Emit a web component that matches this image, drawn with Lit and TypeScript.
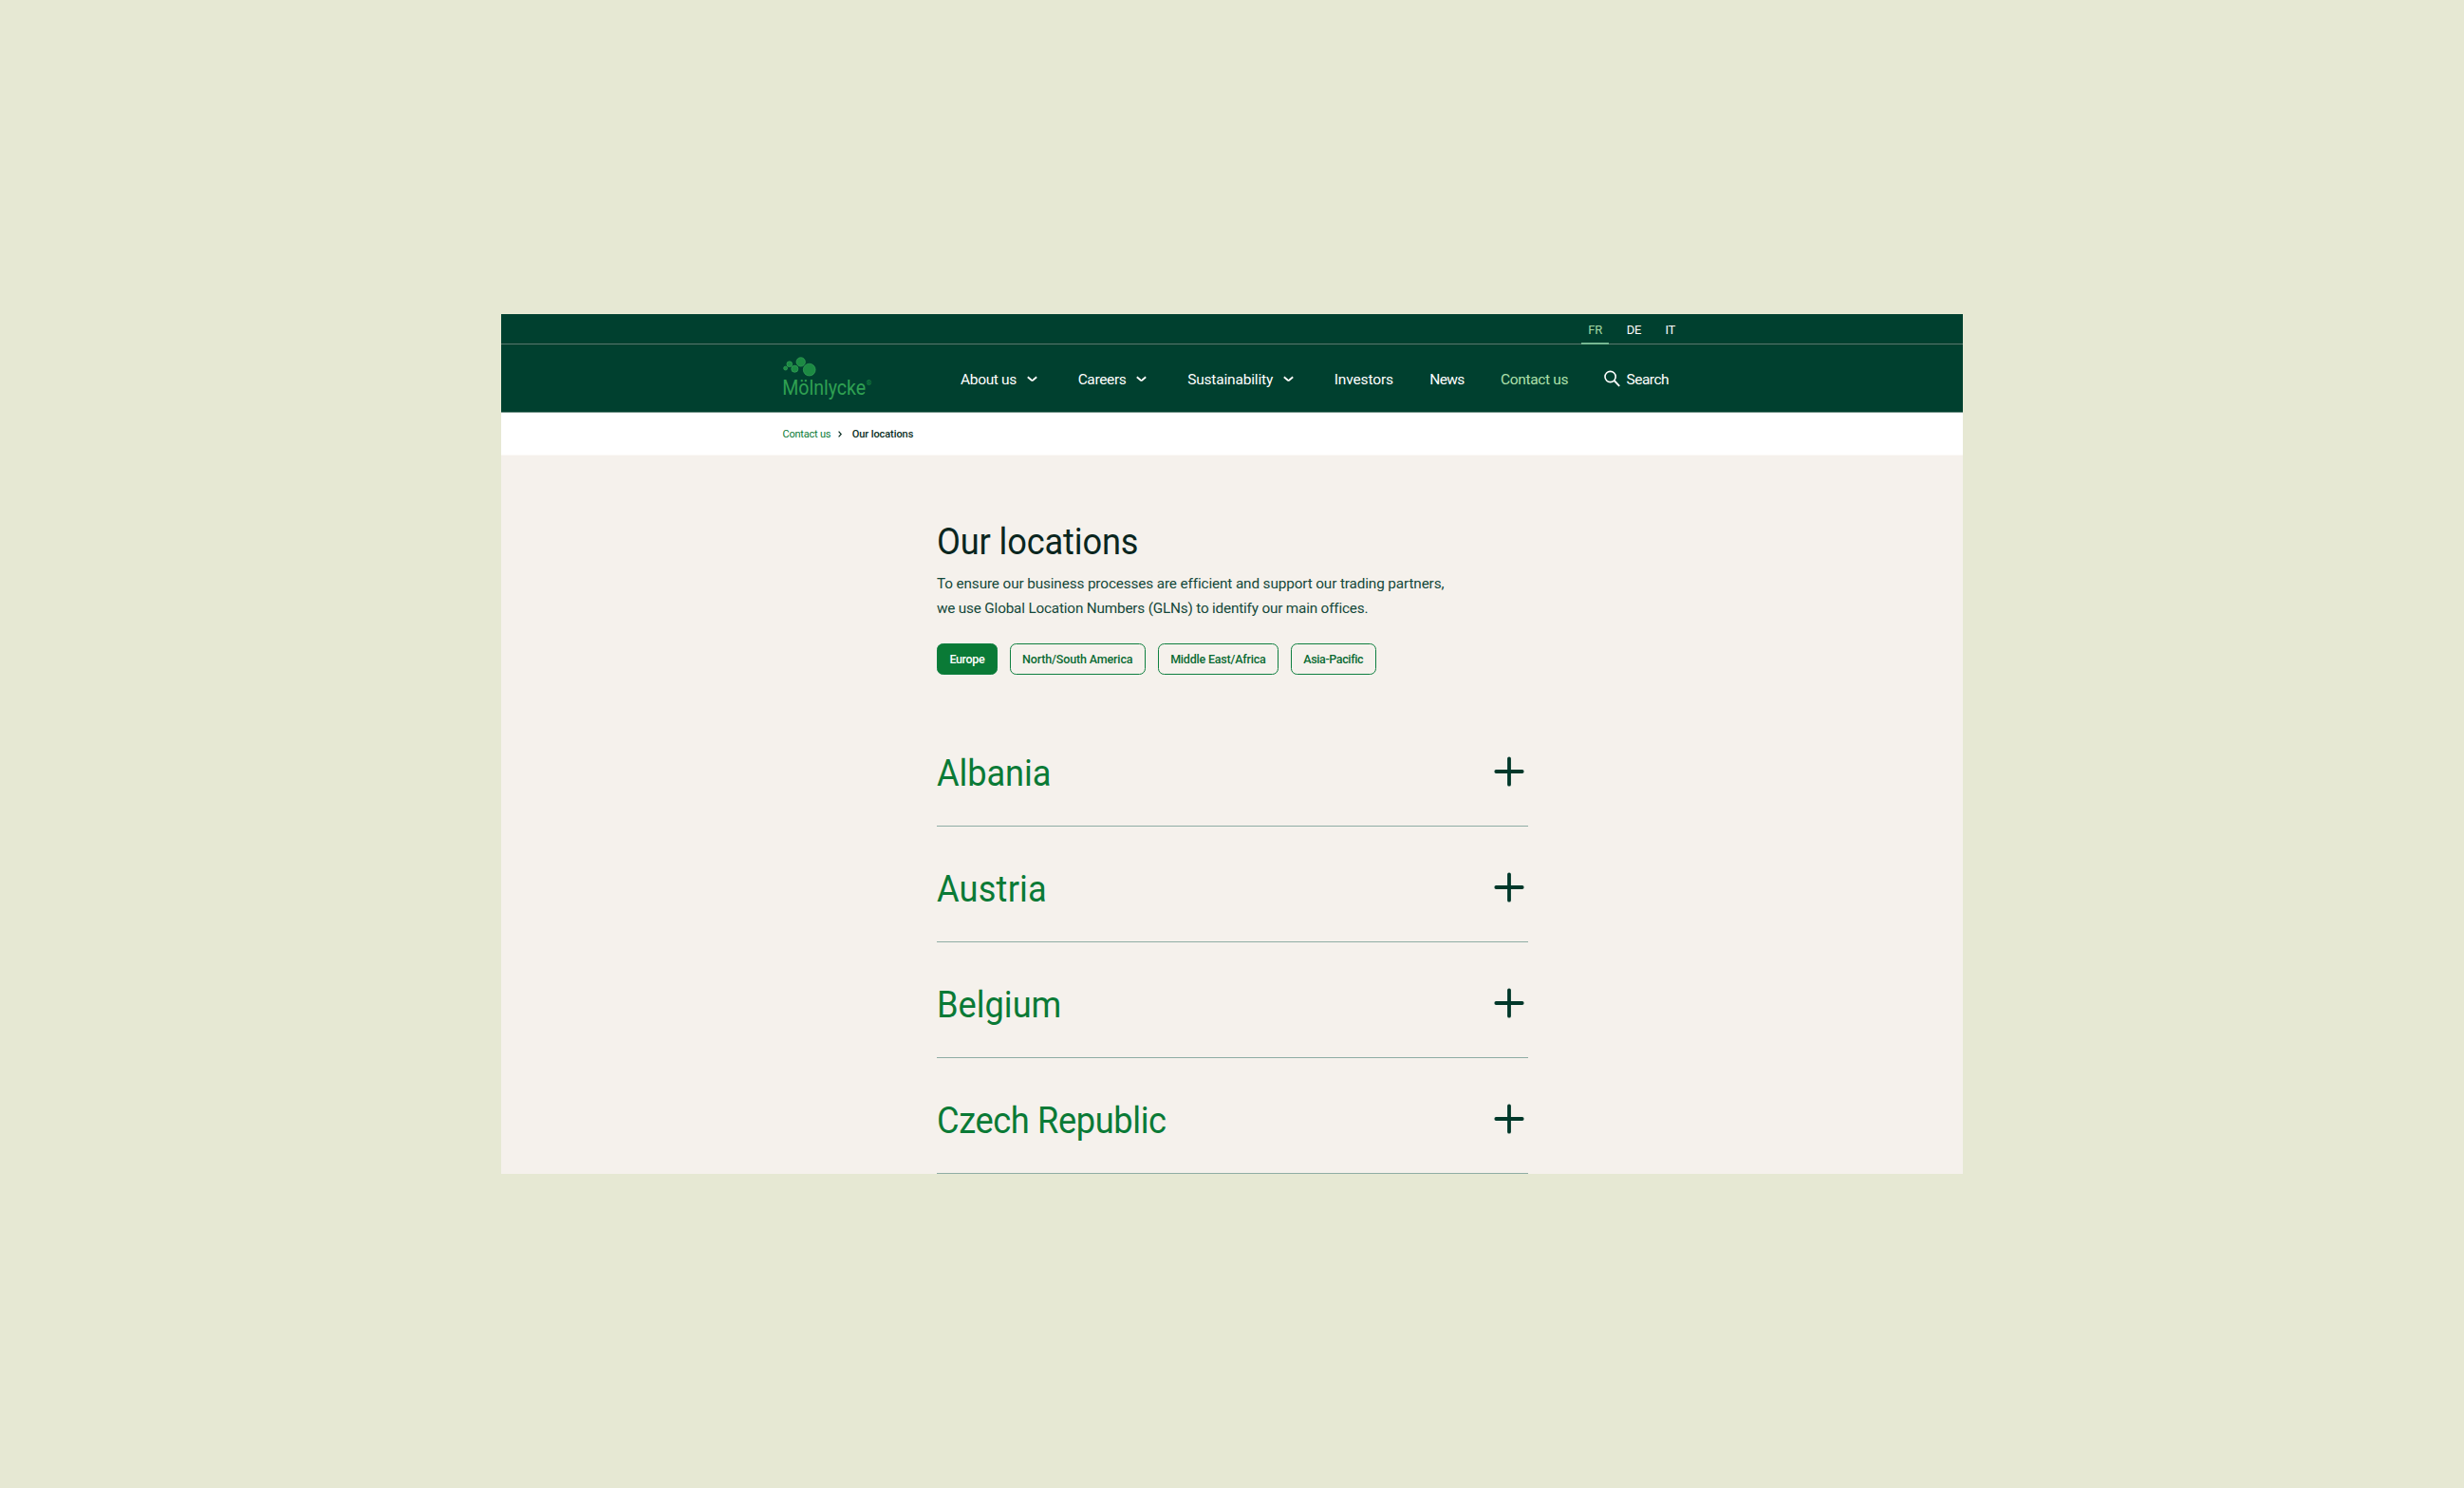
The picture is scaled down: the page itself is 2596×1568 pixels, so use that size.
import { LitElement, html, svg, css, nothing } from 'lit';
import { customElement, property } from 'lit/decorators.js';
import { classMap } from 'lit/directives/class-map.js';

interface Label {
  text: string;
  /** Letter spacing in px. */
  tracking: number;
}

interface NavItem extends Label {
  menu?: boolean;
  active?: boolean;
}

const LANGUAGES: NavItem[] = [
  { text: 'FR', tracking: -0.1, active: true },
  { text: 'DE', tracking: -0.3 },
  { text: 'IT', tracking: -0.3 },
];

const NAV: NavItem[] = [
  { text: 'About us', tracking: -0.34, menu: true },
  { text: 'Careers', tracking: -0.36, menu: true },
  { text: 'Sustainability', tracking: -0.18, menu: true },
  { text: 'Investors', tracking: -0.13 },
  { text: 'News', tracking: -0.6 },
  { text: 'Contact us', tracking: -0.32, active: true },
];

const REGIONS: NavItem[] = [
  { text: 'Europe', tracking: -0.35, active: true },
  { text: 'North/South America', tracking: -0.15 },
  { text: 'Middle East/Africa', tracking: -0.2 },
  { text: 'Asia-Pacific', tracking: -0.38 },
];

const COUNTRIES: Label[] = [
  { text: 'Albania', tracking: -0.1 },
  { text: 'Austria', tracking: 0.2 },
  { text: 'Belgium', tracking: 0 },
  { text: 'Czech Republic', tracking: -0.4 },
];

const tracking = (item: Label) => `letter-spacing: ${item.tracking}px`;

/**
 * Logo of circles above the company name.
 */
@customElement('brand-logo')
class BrandLogo extends LitElement {
  static styles = css`
    :host {
      display: block;
    }
    .logo {
      display: block;
    }
    .dot {
      fill: #1c8a43;
      stroke: #3aa85d;
      stroke-width: 0.6;
    }
    .name {
      fill: #2fa052;
      font: 400 22px Roboto, sans-serif;
    }
    .mark {
      fill: #1b8a42;
      font: 700 7.5px Roboto, sans-serif;
    }
  `;

  render() {
    const dots = [
      [2.6, 12, 2],
      [6.8, 7.7, 2.9],
      [12.3, 12.7, 3.6],
      [18.7, 5.4, 4.7],
      [27.7, 13.6, 6.4],
    ];
    return html`
      <svg class="logo" width="98" height="48" viewBox="-1 0 98 48">
        ${dots.map(([x, y, r]) => svg`<circle class="dot" cx=${x} cy=${y} r=${r}></circle>`)}
        <text class="name" x="-0.8" y="40.4" textLength="88" lengthAdjust="spacingAndGlyphs">Mölnlycke</text>
        <text class="mark" x="87.4" y="30.2">®</text>
      </svg>
    `;
  }
}

/**
 * Green header with the language row and the main navigation.
 */
@customElement('site-header')
class SiteHeader extends LitElement {
  static styles = css`
    :host {
      display: block;
      background: #00402f;
      color: #fff;
    }
    .languages {
      box-sizing: border-box;
      display: flex;
      justify-content: flex-end;
      height: 32px;
      padding-right: 296.5px;
      border-bottom: 1px solid #5b776d;
      font-size: 13px;
      line-height: 34px;
    }
    .language {
      box-sizing: border-box;
      height: 32px;
      padding: 0 6.5px;
      margin-left: 12.5px;
    }
    .language.active {
      padding: 0 7px;
      margin-right: -0.5px;
      color: #a3d9a5;
      border-bottom: 2px solid #76b792;
    }
    .main {
      box-sizing: border-box;
      display: flex;
      height: 72px;
      padding-left: 296px;
      border-bottom: 1px solid #7a988e;
    }
    .logo {
      width: 98px;
      margin-top: 13px;
    }
    .nav {
      display: flex;
      align-items: center;
      gap: 38.2px;
      height: 74px;
      padding-left: 90px;
      font-size: 15.5px;
      white-space: nowrap;
    }
    .item {
      display: flex;
      align-items: center;
    }
    .item.active {
      color: #aee0ac;
    }
    .chevron {
      margin: -1px 4.5px 0 11px;
    }
    .search-icon {
      margin: -3px 6px 0 0;
    }
    .search {
      letter-spacing: -0.5px;
    }
  `;

  render() {
    return html`
      <div class="languages">
        ${LANGUAGES.map(
          (item) => html`
            <div class=${classMap({ language: true, active: !!item.active })} style=${tracking(item)}>${item.text}</div>
          `
        )}
      </div>
      <div class="main">
        <brand-logo class="logo"></brand-logo>
        <nav class="nav">
          ${NAV.map(
            (item) => html`
              <div class=${classMap({ item: true, active: !!item.active })}>
                <span style=${tracking(item)}>${item.text}</span>
                ${item.menu
                  ? html`<svg class="chevron" width="11" height="7" viewBox="0 0 11 7" fill="none" stroke="#fff" stroke-width="1.8">
                      <path d="M0.8 1.2L4.6 4.5Q5.5 5.2 6.4 4.5L10.2 1.2" />
                    </svg>`
                  : nothing}
              </div>
            `
          )}
          <div class="item">
            <svg class="search-icon" width="17" height="18" viewBox="0 0 17 18" fill="none" stroke="#fff" stroke-width="1.6">
              <circle cx="6.6" cy="7" r="5.6" />
              <path d="M10.6 11L16.2 16.8" stroke-width="1.9" />
            </svg>
            <span class="search">Search</span>
          </div>
        </nav>
      </div>
    `;
  }
}

/**
 * <country-row
 *  name = "The country shown."
 *  tracking = "Letter spacing of the name in px."
 * ></country-row>
 */
@customElement('country-row')
class CountryRow extends LitElement {
  static styles = css`
    :host {
      box-sizing: border-box;
      display: flex;
      align-items: center;
      justify-content: space-between;
      height: 122px;
      padding: 7px 4px 0 0;
      border-bottom: 1px solid #8fada4;
    }
    .name {
      margin-top: 3px;
      color: #0a7a36;
      font-size: 38.5px;
      line-height: 48px;
      white-space: nowrap;
      transform: scaleX(0.94);
      transform-origin: left;
    }
  `;

  @property() name = '';
  @property({ type: Number }) tracking = 0;

  render() {
    return html`
      <div class="name" style="letter-spacing: ${this.tracking}px">${this.name}</div>
      <svg width="32" height="32" viewBox="0 0 32 32" stroke="#00382a" stroke-width="3.8" stroke-linecap="round">
        <path d="M2.3 16H29.7M16 2.3V29.7" />
      </svg>
    `;
  }
}

@customElement('app-root')
class AppRoot extends LitElement {
  static styles = css`
    :host {
      box-sizing: border-box;
      display: block;
      height: 1568px;
      padding: 331px 528px;
      background: #e6e8d3;
      font-family: Roboto, 'Liberation Sans', sans-serif;
    }
    .page {
      width: 1540px;
      height: 906px;
      overflow: hidden;
      background: #f5f1ec;
    }
    .breadcrumb {
      box-sizing: border-box;
      display: flex;
      align-items: center;
      height: 45px;
      padding: 1px 0 0 296.5px;
      background: #fff;
      border-bottom: 1px solid #fbf9f7;
      color: #0a7a36;
      font-size: 11px;
    }
    .parent {
      letter-spacing: -0.22px;
    }
    .separator {
      margin: 0 11px 0 7.5px;
    }
    .current {
      color: #0b2e24;
      font-weight: 500;
      letter-spacing: -0.08px;
    }
    .content {
      width: 623px;
      padding: 67px 0 0 459px;
    }
    .title {
      margin: 0 0 8px;
      color: #0a261e;
      font-size: 38.5px;
      font-weight: 400;
      line-height: 48px;
      letter-spacing: -0.15px;
      transform: scaleX(0.94);
      transform-origin: left;
    }
    .intro {
      margin: 0;
      color: #14483a;
      font-size: 15.3px;
      line-height: 25.8px;
      letter-spacing: -0.12px;
      white-space: nowrap;
    }
    .intro.last {
      letter-spacing: -0.18px;
    }
    .regions {
      display: flex;
      gap: 13px;
      margin: 23.5px 0 38px;
    }
    .region {
      box-sizing: border-box;
      height: 33px;
      padding: 0 12.4px;
      border: 1px solid #0e7f3f;
      border-radius: 6.5px;
      color: #0a6a32;
      font-size: 12.5px;
      font-weight: 500;
      line-height: 31.5px;
      white-space: nowrap;
    }
    .region.active {
      background: #0a7a36;
      color: #fff;
    }
  `;

  render() {
    return html`
      <div class="page">
        <site-header></site-header>
        <div class="breadcrumb">
          <span class="parent">Contact us</span>
          <svg class="separator" width="4" height="7" viewBox="0 0 4 7" fill="none" stroke="#0b2e24" stroke-width="1.2">
            <path d="M0.6 0.6L3.2 3.5L0.6 6.4" />
          </svg>
          <span class="current">Our locations</span>
        </div>
        <div class="content">
          <h1 class="title">Our locations</h1>
          <p class="intro">To ensure our business processes are efficient and support our trading partners,</p>
          <p class="intro last">we use Global Location Numbers (GLNs) to identify our main offices.</p>
          <div class="regions">
            ${REGIONS.map(
              (item) => html`
                <div class=${classMap({ region: true, active: !!item.active })} style=${tracking(item)}>${item.text}</div>
              `
            )}
          </div>
          ${COUNTRIES.map(
            (item) => html`<country-row name=${item.text} tracking=${item.tracking}></country-row>`
          )}
        </div>
      </div>
    `;
  }
}
